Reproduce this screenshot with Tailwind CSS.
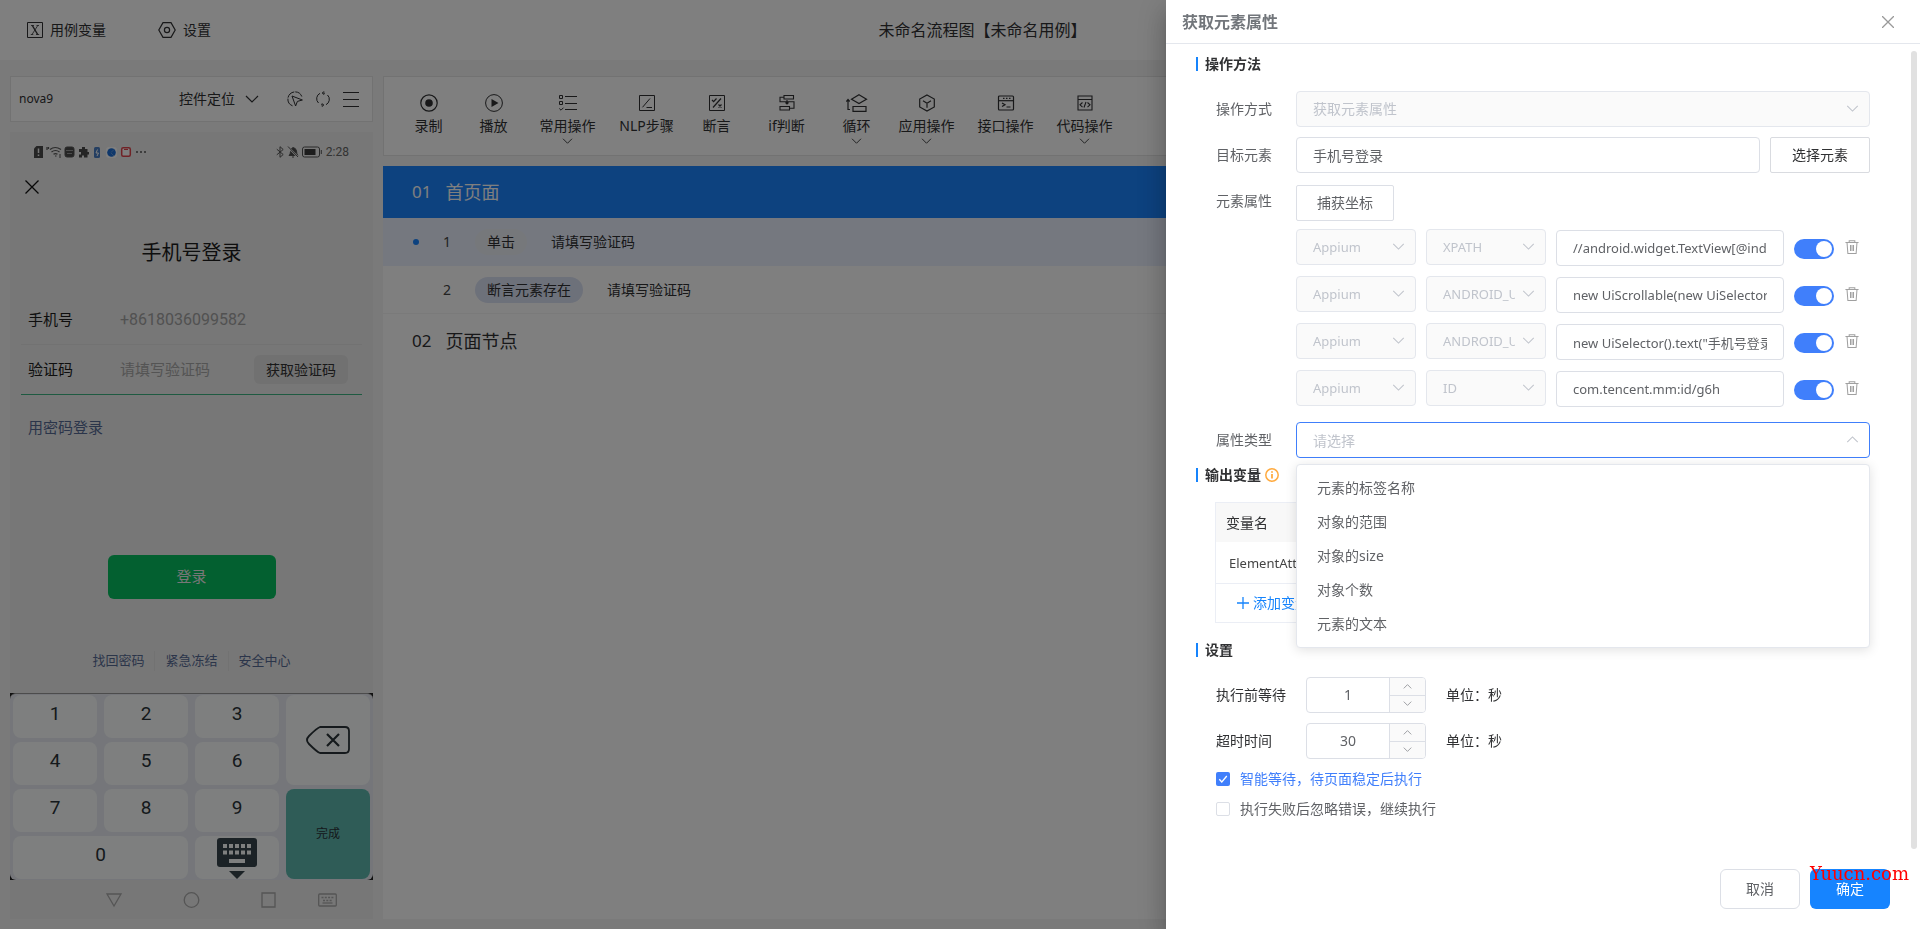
<!DOCTYPE html>
<html lang="zh-CN">
<head>
<meta charset="utf-8">
<title>未命名流程图【未命名用例】</title>
<script src="https://cdn.jsdelivr.net/npm/@tailwindcss/browser@4"></script>
</head>
<body class="min-h-screen overflow-hidden bg-[#f5f5f5] font-['Noto_Sans','Noto_Sans_CJK_SC',sans-serif] text-sm leading-5 text-[#303133]">
<svg class="hidden" aria-hidden="true">
  <symbol id="down" viewBox="0 0 14 8"><path d="M1 1l6 6 6-6" fill="none" stroke="currentColor" stroke-width="1.2"/></symbol>
  <symbol id="up" viewBox="0 0 14 8"><path d="M1 7l6-6 6 6" fill="none" stroke="currentColor" stroke-width="1.2"/></symbol>
  <symbol id="trash" viewBox="0 0 14 16"><path d="M0 2.7h14M4 2.5V.8h6v1.7M1.7 3l.9 11.4h8.8L12.3 3M5.4 5.2v6.6M8.6 5.2v6.6M7 5.2v6.6" fill="none" stroke="currentColor" stroke-width="1.1"/></symbol>
</svg>

<div class="flex min-h-screen flex-col">
  <header class="flex h-[60px] items-center bg-white pl-[27px]">
    <nav class="flex items-center gap-[52px]">
      <button class="flex items-center gap-[7px]">
        <svg class="h-4 w-4" viewBox="0 0 16 16" fill="none" stroke="currentColor"><path d="M.5.5h15v15H.5z"/><path d="M4 3.500h3M9.500 3.500h2.500M3.800 12.500h2.500M9 12.500h3.200M10.800 3.500l-5.800 9" stroke-width=".8"/><path d="M5.300 3.500l5.400 9" stroke-width="1.400"/></svg>
        <span>用例变量</span>
      </button>
      <button class="flex items-center gap-[7px]">
        <svg class="h-4 w-[18px]" viewBox="0 0 18 16" fill="none" stroke="currentColor" stroke-width="1.200"><path d="M5 .6h8L17.200 8 13 15.400H5L.8 8z"/><circle cx="9" cy="8" r="2.600"/></svg>
        <span>设置</span>
      </button>
    </nav>
    <h1 class="flex-1 text-center text-base">未命名流程图【未命名用例】</h1>
    <div class="w-[166px]"></div>
  </header>

  <main class="flex flex-1 gap-[10px] px-[10px] pt-4 pb-[10px]">
    <section class="flex w-[363px] shrink-0 flex-col gap-[10px]">
      <div class="flex h-[46px] items-center border border-[#e4e4e4] bg-white pr-[13px] pl-2">
        <span class="flex-1 text-xs">nova9</span>
        <button class="flex items-center gap-[10px]"><span>控件定位</span><svg class="h-2 w-[14px]"><use href="#down"/></svg></button>
        <button class="ml-7" aria-label="选择控件"><svg class="block h-4 w-4" viewBox="0 0 16 16" fill="none" stroke="currentColor"><path d="M5.500 14.800A7.200 7.200 0 1 1 14.800 5.500" stroke-dasharray="9 1"/><path d="M5 5l3.600 10 1.800-4.600L15.400 9z"/></svg></button>
        <button class="ml-3" aria-label="刷新"><svg class="block h-4 w-4" viewBox="0 0 16 16" fill="none" stroke="currentColor"><path d="M5 2.300A6 6 0 0 0 3.500 12M11 13.700A6 6 0 0 0 12.500 4M8 14a6 6 0 0 1-2-.3M8 2a6 6 0 0 1 2 .3M9 .3L7.300 2 9 3.800M7 12.300L8.700 14 7 15.800"/></svg></button>
        <button class="ml-3" aria-label="菜单"><svg class="block h-4 w-4" viewBox="0 0 16 16" stroke="currentColor"><path d="M0 1.500h16M0 8.500h16M0 15.500h16"/></svg></button>
      </div>

      <div class="flex flex-1 flex-col bg-[#eeeeee] font-['Roboto','Noto_Sans_CJK_SC',sans-serif] text-[15px] text-[#1c1c1c]">
        <div class="flex h-10 items-center pr-6 pl-6 text-[#555]">
          <svg class="h-3 w-[112px]" viewBox="0 0 112 12" fill="none" stroke="currentColor">
            <path d="M2.500 0H9v12H0V2.500z" fill="#4a4a4a" stroke="none"/><path d="M4.500 2.500v4.500M4.500 8.500v1.500" stroke="#eee" stroke-width="1.500"/>
            <path d="M13 1v3M14.500 1v2M16 3.500q5-4 11 0M17.500 6q4-3 8 0M19.500 8.300q2-1.500 4 0M21 10h1.500M25 9h2M25 11h2" stroke-width="1.200"/>
            <rect x="31" y="1" width="9" height="10" rx="2" fill="#4a4a4a"/><path d="M32 4.500h7M33 7.500h5" stroke="#999"/>
            <path d="M45 3h3V1h3v2h2.500v3h1.500v2.500h-1.500V11.500H50V9.500h-2v2h-3V8.500h2v-2.500h-2z" fill="#4a4a4a" stroke="none"/>
            <rect x="60" y="1" width="6" height="11" rx="1.500" fill="#4a7fc4" stroke="none"/><path d="M63.500 3.500L62 7h2.500L63 10" stroke="#fff"/>
            <rect x="72" y="1" width="11" height="11" rx="3" fill="#fff" stroke="none"/><circle cx="77.500" cy="6.500" r="4.300" fill="#1d6fd6" stroke="none"/><path d="M77 6.500l3-3M77 7l3 3" stroke="#7aa8e0" stroke-width=".7"/>
            <rect x="87.700" y="1.700" width="8.600" height="8.600" rx="1.500" fill="#fff" stroke="#e0454d" stroke-width="1.500"/><path d="M90 3.500h4" stroke="#e0454d"/>
            <path d="M102 6h2M106 6h2M110 6h2" stroke-width="1.600"/>
          </svg>
          <div class="flex-1"></div>
          <svg class="h-3 w-[46px]" viewBox="0 0 46 12" fill="none" stroke="currentColor">
            <path d="M.8 3.200l6.400 5.300L4 11.300V.7l3.200 2.800L.8 8.800"/>
            <path d="M13 9.500q1.500-1 1.500-4 0-3 2.500-4 3 .5 3.500 3.500 0 3 1.500 4.500zM16 11h2" fill="#4a4a4a"/><path d="M12 1l10 10" stroke="#eee" stroke-width="2"/><path d="M12 .5l10 10.500"/>
            <rect x="26.500" y="1" width="17" height="10" rx="2"/><rect x="28.500" y="3" width="11" height="6" fill="#3a3a3a" stroke="none"/><path d="M45.300 4v4"/>
          </svg>
          <span class="ml-1 text-xs text-[#666]">2:28</span>
        </div>
        <button class="mt-2 ml-[15px] h-[14px] w-[14px] text-[#111]" aria-label="关闭"><svg class="block h-[14px] w-[14px]" viewBox="0 0 14 14" stroke="currentColor" stroke-width="1.300"><path d="M.5.5l13 13M13.500.5l-13 13"/></svg></button>
        <h2 class="mt-[45px] text-center text-[20px] leading-7">手机号登录</h2>
        <div class="mx-[11px] mt-[28px] flex h-[50px] items-center border-b border-[#e4e4e4] pl-[7px]">
          <span class="w-[92px]">手机号</span><span class="text-base text-[#a3a3a3]">+8618036099582</span>
        </div>
        <div class="mx-[11px] flex h-[50px] items-center border-b border-[#3cb583] pr-[14px] pl-[7px]">
          <label for="code" class="w-[92px]">验证码</label>
          <input id="code" class="w-0 flex-1 placeholder:text-[#a9a9a9]" placeholder="请填写验证码">
          <button class="h-[29px] w-[94px] rounded-md bg-[#e2e2e2] text-sm text-[#333]">获取验证码</button>
        </div>
        <a href="#" class="mt-[23px] ml-[18px] text-[#576b95]">用密码登录</a>
        <button class="mt-[117px] h-11 w-[168px] self-center rounded-md bg-[#07c160] text-[#eee]">登录</button>
        <div class="mt-[52px] flex justify-center text-[13px] text-[#576b95]">
          <a href="#" class="border-r border-[#e4e4e4] px-[10px]">找回密码</a><a href="#" class="border-r border-[#e4e4e4] px-[10px]">紧急冻结</a><a href="#" class="px-[10px]">安全中心</a>
        </div>
        <div class="mt-[22px] bg-[#222]">
          <div class="grid grid-cols-4 grid-rows-4 gap-x-[7px] gap-y-1 rounded-md border-t border-[#999] bg-[#eaecf4] px-[3px] pt-px pb-px text-[19px] text-[#2a3338]">
            <button class="h-[43px] rounded-lg bg-[#fcfffe] pb-[6px]">1</button>
            <button class="rounded-lg bg-[#fcfffe] pb-[6px]">2</button>
            <button class="rounded-lg bg-[#fcfffe] pb-[6px]">3</button>
            <button class="row-span-2 flex items-center justify-center rounded-lg bg-[#fcfffe]" aria-label="删除"><svg class="h-7 w-[44px]" viewBox="0 0 44 28" fill="none" stroke="currentColor" stroke-width="1.800"><path d="M14 1h25q4 0 4 4v18q0 4-4 4H14Q11 26 3 18q-4-4 0-8Q11 2 14 1z"/><path d="M21 8l12 12M33 8L21 20" stroke-width="2.200"/></svg></button>
            <button class="h-[43px] rounded-lg bg-[#fcfffe] pb-[6px]">4</button>
            <button class="rounded-lg bg-[#fcfffe] pb-[6px]">5</button>
            <button class="rounded-lg bg-[#fcfffe] pb-[6px]">6</button>
            <button class="row-span-2 col-start-4 row-start-3 rounded-lg bg-[#5eb8ae] text-xs">完成</button>
            <button class="h-[43px] rounded-lg bg-[#fcfffe] pb-[6px]">7</button>
            <button class="rounded-lg bg-[#fcfffe] pb-[6px]">8</button>
            <button class="rounded-lg bg-[#fcfffe] pb-[6px]">9</button>
            <button class="col-span-2 h-[43px] rounded-lg bg-[#fcfffe] pb-[6px]">0</button>
            <button class="flex items-end justify-center rounded-lg bg-[#fcfffe]" aria-label="收起键盘"><svg class="h-[41px] w-10" viewBox="0 0 40 41" fill="#36454c"><rect width="40" height="29" rx="3"/><path d="M12 33h16l-8 8z"/><path d="M6 6h4v4H6zM12 6h4v4h-4zM18 6h4v4h-4zM24 6h4v4h-4zM30 6h4v4h-4zM6 12.500h4v4H6zM12 12.500h4v4h-4zM18 12.500h4v4h-4zM24 12.500h4v4h-4zM30 12.500h4v4h-4zM12 21h16v4H12z" fill="#fcfffe"/></svg></button>
          </div>
        </div>
        <div class="flex flex-1 items-center pr-9 pl-24 text-[#aaa]">
          <svg class="h-4 w-[231px]" viewBox="0 0 231 16" fill="none" stroke="currentColor" stroke-width="1.300"><path d="M1 2h14L8 14z"/><circle cx="85.500" cy="8" r="7.300"/><path d="M156 1h13v14h-13z"/><rect x="212.700" y="2" width="17.600" height="12" rx="1"/><path d="M215.500 5.500h12M217 8.500h9" stroke-dasharray="2 1.300"/><path d="M216.500 11h10"/></svg>
        </div>
      </div>
    </section>

    <section class="flex min-w-0 flex-1 flex-col">
      <div class="flex h-20 items-start border border-[#e4e4e4] bg-white pt-4 pl-[14px]">
        <button class="flex w-[61px] flex-col items-center"><svg class="my-px h-[18px] w-[18px]" viewBox="0 0 18 18" fill="none" stroke="currentColor" stroke-width="1.200"><circle cx="9" cy="9" r="8.200"/><circle cx="9" cy="9" r="3.800" fill="currentColor" stroke="none"/></svg><span class="mt-[3px]">录制</span></button>
        <button class="flex w-[69px] flex-col items-center"><svg class="my-px h-[18px] w-[18px]" viewBox="0 0 18 18" fill="none" stroke="currentColor"><circle cx="9" cy="9" r="8.400"/><path d="M6.500 5v8l7-4z" fill="currentColor" stroke="none"/></svg><span class="mt-[3px]">播放</span></button>
        <button class="flex w-[79px] flex-col items-center"><svg class="my-px h-[18px] w-[18px]" viewBox="0 0 18 18" fill="none" stroke="currentColor"><path d="M6 2.500h12M6 9.500h12M6 15.500h12M.5 1.500h3v3h-3zM.5 7.500h3v3h-3zM.3 14.500l1.700 1.700 2.500-2.500"/></svg><span class="mt-[3px]">常用操作</span><svg class="mt-[2px] h-[6px] w-[11px]"><use href="#down"/></svg></button>
        <button class="flex w-[79px] flex-col items-center"><svg class="my-px h-[18px] w-[18px]" viewBox="0 0 18 18" fill="none" stroke="currentColor"><path d="M1.500 1.500h15v15h-15zM12 4.500l-7.500 8.800M8.500 13.500h5.500"/></svg><span class="mt-[3px]">NLP步骤</span></button>
        <button class="flex w-[61px] flex-col items-center"><svg class="my-px h-[18px] w-[18px]" viewBox="0 0 18 18" fill="none" stroke="currentColor"><path d="M1.500 1.500h15v15h-15z"/><path d="M13 4.500l-8 9M4 6l1.600 1.600L8.500 4.500M10.500 10.500l3 3M13.500 10.500l-3 3" stroke-width="1.200"/></svg><span class="mt-[3px]">断言</span></button>
        <button class="flex w-[79px] flex-col items-center"><svg class="my-px h-[18px] w-[18px]" viewBox="0 0 18 18" fill="none" stroke="currentColor" stroke-width="1.100"><path d="M6 1.500h9.500v3.500H6zM2 12.500h9.500V16H2zM6 3.200H2v4.500h14v6.500h-4.500M9 6v4M7.500 8.500L9 10l1.500-1.500"/></svg><span class="mt-[3px]">if判断</span></button>
        <button class="flex w-[61px] flex-col items-center"><svg class="my-px h-[18px] w-[22px]" viewBox="0 0 22 18" fill="none" stroke="currentColor" stroke-width="1.200"><path d="M13 .8l7.500 4.400L13 9.600 5.500 5.200zM7 12.500h13v4.800H7zM4 15.500H2V5.500M.3 7.500L2 5.500l1.700 2"/></svg><span class="mt-[3px]">循环</span><svg class="mt-[2px] h-[6px] w-[11px]"><use href="#down"/></svg></button>
        <button class="flex w-[79px] flex-col items-center"><svg class="my-px h-[18px] w-[18px]" viewBox="0 0 18 18" fill="none" stroke="currentColor" stroke-width="1.200"><path d="M9 1l7.300 4v8L9 17l-7.300-4V5zM5 6.800l4 2.400 4-2.400M9 9.200v4.500"/></svg><span class="mt-[3px]">应用操作</span><svg class="mt-[2px] h-[6px] w-[11px]"><use href="#down"/></svg></button>
        <button class="flex w-[79px] flex-col items-center"><svg class="my-px h-[18px] w-[18px]" viewBox="0 0 18 18" fill="none" stroke="currentColor" stroke-width="1.200"><rect x="1.500" y="2" width="15" height="14" rx="1"/><path d="M1.500 6.700h15"/><path d="M6 4.300h1.500M9 4.300h1.500M12 4.300h1.500M5 9l3 1.700-3 1.700M9.500 13h4"/></svg><span class="mt-[3px]">接口操作</span></button>
        <button class="flex w-[79px] flex-col items-center"><svg class="my-px h-[18px] w-[18px]" viewBox="0 0 18 18" fill="none" stroke="currentColor" stroke-width="1.100"><path d="M2 2h14v14H2zM2 5.500h14"/><path d="M6.500 8.500L4 10.800l2.500 2.300M11.500 8.500l2.500 2.300-2.500 2.300M10 8l-2 5.500"/></svg><span class="mt-[3px]">代码操作</span><svg class="mt-[2px] h-[6px] w-[11px]"><use href="#down"/></svg></button>
      </div>

      <div class="mt-[10px] flex-1 bg-white">
        <div class="flex h-[52px] items-center gap-[14px] bg-[#1a84ff] pl-[29px] text-[18px] text-white"><span class="text-[17px]">01</span><span>首页面</span></div>
        <div class="flex h-12 items-center bg-[#eaf0ff] pl-[30px]">
          <span class="h-[6px] w-[6px] rounded-full bg-[#1a84ff]"></span>
          <span class="ml-6 w-8 text-[#444]">1</span>
          <span class="flex h-[26px] items-center rounded-full bg-[#edf0f6] px-3">单击</span>
          <span class="ml-6">请填写验证码</span>
        </div>
        <div class="flex h-12 items-center border-b border-[#f5f5f5] pl-[60px]">
          <span class="w-8 text-[#444]">2</span>
          <span class="flex h-[26px] items-center rounded-full bg-[#dbe2f5] px-3">断言元素存在</span>
          <span class="ml-6">请填写验证码</span>
        </div>
        <div class="flex h-[54px] items-center gap-[14px] pl-[29px] text-[18px]"><span class="text-[17px]">02</span><span>页面节点</span></div>
      </div>
    </section>
  </main>
</div>

<div class="fixed inset-0 bg-black/50"></div>

<aside role="dialog" aria-labelledby="dlg-title" class="fixed inset-y-0 right-0 flex w-[754px] max-w-full flex-col bg-white shadow-[0_8px_10px_-5px_rgba(0,0,0,0.2),0_16px_24px_2px_rgba(0,0,0,0.14),0_6px_30px_5px_rgba(0,0,0,0.12)]">
  <header class="flex h-11 items-center justify-between border-b border-[#e4e7ed] pr-[26px] pl-4">
    <h2 id="dlg-title" class="text-base font-bold text-[#72767b]">获取元素属性</h2>
    <button aria-label="关闭" class="text-[#999]"><svg class="block h-3 w-3" viewBox="0 0 12 12" stroke="currentColor" stroke-width="1.300"><path d="M0 0l12 12M12 0L0 12"/></svg></button>
  </header>

  <div class="relative flex-1 pt-[10px] pr-[50px] pl-[30px] text-[#606266]">
    <div class="absolute top-[7px] right-[3px] bottom-0 w-[6px] rounded-full bg-[#e1e1e1]"></div>

    <h3 class="flex h-5 items-center gap-[7px] font-bold text-[#303133]"><span class="h-[14px] w-[2px] bg-[#1684fc]"></span>操作方法</h3>

    <div class="mt-[17px] flex flex-col gap-[10px] pl-5">
      <div class="flex items-center">
        <label for="method" class="w-20">操作方式</label>
        <div class="relative flex-1">
          <select id="method" disabled class="block h-9 w-full appearance-none rounded border border-[#e4e7ed] bg-[#fafafa] pr-8 pl-4 text-[#c0c4cc] opacity-100"><option>获取元素属性</option></select>
          <svg class="absolute top-[14px] right-[11px] h-[7px] w-[13px] text-[#c0c4cc]"><use href="#down"/></svg>
        </div>
      </div>
      <div class="flex items-center">
        <label for="target" class="w-20">目标元素</label>
        <input id="target" value="手机号登录" class="h-9 w-0 flex-1 rounded border border-[#dcdfe6] px-4">
        <button class="ml-[10px] h-9 w-[100px] rounded-xs border border-[#d9dbe0] text-[#303133]">选择元素</button>
      </div>
      <div class="flex items-start">
        <span class="w-20 leading-9">元素属性</span>
        <div class="flex-1">
          <button class="mt-[2px] h-9 w-[98px] rounded-xs border border-[#dcdfe6]">捕获坐标</button>
          <div class="mt-2 flex flex-col gap-[10px]">
            <div class="flex h-[37px] items-start gap-[10px]">
              <div class="relative w-[120px]"><select aria-label="引擎" disabled class="block h-9 w-full appearance-none rounded border border-[#e4e7ed] bg-[#fafafa] pr-[30px] pl-4 text-[13px] text-[#c0c4cc] opacity-100"><option>Appium</option></select><svg class="absolute top-[14px] right-[11px] h-[7px] w-[13px] text-[#c0c4cc]"><use href="#down"/></svg></div>
              <div class="relative w-[120px]"><select aria-label="定位方式" disabled class="block h-9 w-full appearance-none rounded border border-[#e4e7ed] bg-[#fafafa] pr-[30px] pl-4 text-[13px] text-[#c0c4cc] opacity-100"><option>XPATH</option></select><svg class="absolute top-[14px] right-[11px] h-[7px] w-[13px] text-[#c0c4cc]"><use href="#down"/></svg></div>
              <input aria-label="属性值" value="//android.widget.TextView[@index=&quot;1&quot;]" class="mt-px h-9 w-0 flex-1 rounded border border-[#dcdfe6] px-4 text-[13px]">
              <input type="checkbox" checked aria-label="启用" class="mt-[10px] flex h-5 w-10 shrink-0 appearance-none items-center justify-end rounded-full bg-[#407ffb] pr-[2px] before:h-4 before:w-4 before:rounded-full before:bg-white before:content-['']">
              <button aria-label="删除" class="mt-[11px] mr-[11px] ml-px text-[#a0a0a0]"><svg class="block h-[15px] w-[14px]"><use href="#trash"/></svg></button>
            </div>
            <div class="flex h-[37px] items-start gap-[10px]">
              <div class="relative w-[120px]"><select aria-label="引擎" disabled class="block h-9 w-full appearance-none rounded border border-[#e4e7ed] bg-[#fafafa] pr-[30px] pl-4 text-[13px] text-[#c0c4cc] opacity-100"><option>Appium</option></select><svg class="absolute top-[14px] right-[11px] h-[7px] w-[13px] text-[#c0c4cc]"><use href="#down"/></svg></div>
              <div class="relative w-[120px]"><select aria-label="定位方式" disabled class="block h-9 w-full appearance-none rounded border border-[#e4e7ed] bg-[#fafafa] pr-[30px] pl-4 text-[13px] text-[#c0c4cc] opacity-100"><option>ANDROID_UIAUTOMATOR</option></select><svg class="absolute top-[14px] right-[11px] h-[7px] w-[13px] text-[#c0c4cc]"><use href="#down"/></svg></div>
              <input aria-label="属性值" value="new UiScrollable(new UiSelector().scrollable(true))" class="mt-px h-9 w-0 flex-1 rounded border border-[#dcdfe6] px-4 text-[13px]">
              <input type="checkbox" checked aria-label="启用" class="mt-[10px] flex h-5 w-10 shrink-0 appearance-none items-center justify-end rounded-full bg-[#407ffb] pr-[2px] before:h-4 before:w-4 before:rounded-full before:bg-white before:content-['']">
              <button aria-label="删除" class="mt-[11px] mr-[11px] ml-px text-[#a0a0a0]"><svg class="block h-[15px] w-[14px]"><use href="#trash"/></svg></button>
            </div>
            <div class="flex h-[37px] items-start gap-[10px]">
              <div class="relative w-[120px]"><select aria-label="引擎" disabled class="block h-9 w-full appearance-none rounded border border-[#e4e7ed] bg-[#fafafa] pr-[30px] pl-4 text-[13px] text-[#c0c4cc] opacity-100"><option>Appium</option></select><svg class="absolute top-[14px] right-[11px] h-[7px] w-[13px] text-[#c0c4cc]"><use href="#down"/></svg></div>
              <div class="relative w-[120px]"><select aria-label="定位方式" disabled class="block h-9 w-full appearance-none rounded border border-[#e4e7ed] bg-[#fafafa] pr-[30px] pl-4 text-[13px] text-[#c0c4cc] opacity-100"><option>ANDROID_UIAUTOMATOR</option></select><svg class="absolute top-[14px] right-[11px] h-[7px] w-[13px] text-[#c0c4cc]"><use href="#down"/></svg></div>
              <input aria-label="属性值" value="new UiSelector().text(&quot;手机号登录&quot;)" class="mt-px h-9 w-0 flex-1 rounded border border-[#dcdfe6] px-4 text-[13px]">
              <input type="checkbox" checked aria-label="启用" class="mt-[10px] flex h-5 w-10 shrink-0 appearance-none items-center justify-end rounded-full bg-[#407ffb] pr-[2px] before:h-4 before:w-4 before:rounded-full before:bg-white before:content-['']">
              <button aria-label="删除" class="mt-[11px] mr-[11px] ml-px text-[#a0a0a0]"><svg class="block h-[15px] w-[14px]"><use href="#trash"/></svg></button>
            </div>
            <div class="flex h-[37px] items-start gap-[10px]">
              <div class="relative w-[120px]"><select aria-label="引擎" disabled class="block h-9 w-full appearance-none rounded border border-[#e4e7ed] bg-[#fafafa] pr-[30px] pl-4 text-[13px] text-[#c0c4cc] opacity-100"><option>Appium</option></select><svg class="absolute top-[14px] right-[11px] h-[7px] w-[13px] text-[#c0c4cc]"><use href="#down"/></svg></div>
              <div class="relative w-[120px]"><select aria-label="定位方式" disabled class="block h-9 w-full appearance-none rounded border border-[#e4e7ed] bg-[#fafafa] pr-[30px] pl-4 text-[13px] text-[#c0c4cc] opacity-100"><option>ID</option></select><svg class="absolute top-[14px] right-[11px] h-[7px] w-[13px] text-[#c0c4cc]"><use href="#down"/></svg></div>
              <input aria-label="属性值" value="com.tencent.mm:id/g6h" class="mt-px h-9 w-0 flex-1 rounded border border-[#dcdfe6] px-4 text-[13px]">
              <input type="checkbox" checked aria-label="启用" class="mt-[10px] flex h-5 w-10 shrink-0 appearance-none items-center justify-end rounded-full bg-[#407ffb] pr-[2px] before:h-4 before:w-4 before:rounded-full before:bg-white before:content-['']">
              <button aria-label="删除" class="mt-[11px] mr-[11px] ml-px text-[#a0a0a0]"><svg class="block h-[15px] w-[14px]"><use href="#trash"/></svg></button>
            </div>
          </div>
        </div>
      </div>
    </div>

    <div class="mt-[15px] flex items-center pl-5">
      <label for="attr" class="w-20">属性类型</label>
      <div class="relative flex-1">
        <input id="attr" role="combobox" aria-expanded="true" aria-controls="attr-list" readonly placeholder="请选择" class="block h-9 w-full rounded border border-[#407ffb] px-4 placeholder:text-[#c0c4cc]">
        <svg class="absolute top-[14px] right-[11px] h-[7px] w-[13px] text-[#c0c4cc]"><use href="#up"/></svg>
        <ul id="attr-list" role="listbox" class="absolute inset-x-0 top-[42px] z-10 rounded border border-[#e4e7ed] bg-white pt-[6px] pb-[6px] leading-[34px] shadow-[0_2px_12px_0_rgba(0,0,0,0.12)]">
          <li role="option" class="px-5">元素的标签名称</li>
          <li role="option" class="px-5">对象的范围</li>
          <li role="option" class="px-5">对象的size</li>
          <li role="option" class="px-5">对象个数</li>
          <li role="option" class="px-5">元素的文本</li>
        </ul>
      </div>
    </div>

    <h3 class="mt-[7px] flex h-5 items-center gap-[7px] font-bold text-[#303133]"><span class="h-[14px] w-[2px] bg-[#1684fc]"></span><span class="flex items-center gap-1">输出变量<svg class="h-[14px] w-[14px]" viewBox="0 0 14 14" fill="none" stroke="#ffab40" stroke-width="1.500"><circle cx="7" cy="7" r="6.200"/><path d="M7 6v4.500M7 3.300v1.500" stroke-width="1.800"/></svg></span></h3>
    <div class="mt-[17px] ml-[19px] border border-[#ebeef5]">
      <table class="w-full text-left">
        <thead><tr class="bg-[#f8f8f8]"><th class="h-[39px] w-1/3 pl-[10px] font-normal text-[#303133]">变量名</th><th></th></tr></thead>
        <tbody>
          <tr><td class="h-[41px] border-b border-[#ebeef5] pt-[2px] pl-[13px] text-[13px] text-[#444]">ElementAttribute</td><td class="border-b border-[#ebeef5]"></td></tr>
          <tr><td colspan="2" class="h-[39px] pl-[21px]"><button class="flex items-center gap-1 text-[#1684fc]"><svg class="h-3 w-3" viewBox="0 0 12 12" stroke="currentColor" stroke-width="1.300"><path d="M0 6h12M6 0v12"/></svg>添加变量</button></td></tr>
        </tbody>
      </table>
    </div>

    <h3 class="mt-[17px] flex h-5 items-center gap-[7px] font-bold text-[#303133]"><span class="h-[14px] w-[2px] bg-[#1684fc]"></span>设置</h3>
    <div class="mt-[17px] flex flex-col gap-[10px] pl-5 text-[#303133]">
      <div class="flex items-center">
        <label for="wait" class="w-[90px]">执行前等待</label>
        <div class="flex h-9 w-[120px] overflow-hidden rounded border border-[#dcdfe6]">
          <input id="wait" value="1" class="w-0 flex-1 text-center text-[#606266]">
          <div class="flex w-9 flex-col divide-y divide-[#dcdfe6] border-l border-[#dcdfe6] bg-[#fafafa] text-[#808388]"><button aria-label="增加" class="flex flex-1 items-center justify-center"><svg class="h-[5px] w-[9px]"><use href="#up"/></svg></button><button aria-label="减少" class="flex flex-1 items-center justify-center"><svg class="h-[5px] w-[9px]"><use href="#down"/></svg></button></div>
        </div>
        <span class="ml-5">单位：秒</span>
      </div>
      <div class="flex items-center">
        <label for="timeout" class="w-[90px]">超时时间</label>
        <div class="flex h-9 w-[120px] overflow-hidden rounded border border-[#dcdfe6]">
          <input id="timeout" value="30" class="w-0 flex-1 text-center text-[#606266]">
          <div class="flex w-9 flex-col divide-y divide-[#dcdfe6] border-l border-[#dcdfe6] bg-[#fafafa] text-[#808388]"><button aria-label="增加" class="flex flex-1 items-center justify-center"><svg class="h-[5px] w-[9px]"><use href="#up"/></svg></button><button aria-label="减少" class="flex flex-1 items-center justify-center"><svg class="h-[5px] w-[9px]"><use href="#down"/></svg></button></div>
        </div>
        <span class="ml-5">单位：秒</span>
      </div>
      <label class="flex items-center gap-[10px] text-[#407ffb]">
        <span class="grid h-[14px] w-[14px]"><input type="checkbox" checked class="col-start-1 row-start-1 appearance-none rounded-xs bg-[#407ffb]"><svg class="col-start-1 row-start-1 h-[14px] w-[14px]" viewBox="0 0 14 14" fill="none" stroke="#fff" stroke-width="1.300"><path d="M3.300 7.200l2.500 2.800 5-6"/></svg></span>智能等待，待页面稳定后执行
      </label>
      <label class="flex items-center gap-[10px] text-[#606266]">
        <input type="checkbox" class="h-[14px] w-[14px] appearance-none rounded-xs border border-[#dcdfe6]">执行失败后忽略错误，继续执行
      </label>
    </div>
  </div>

  <footer class="relative flex h-20 items-center justify-end gap-[10px] pr-[30px]">
    <button class="h-10 w-20 rounded-md border border-[#dcdfe6] text-[#606266]">取消</button>
    <button class="h-10 w-20 rounded-md bg-[#1684ff] text-white">确定</button>
    <span class="absolute top-[15px] right-[11px] font-['DejaVu_Serif',serif] text-[18px] text-[#ff0000]">Yuucn.com</span>
  </footer>
</aside>
</body>
</html>
